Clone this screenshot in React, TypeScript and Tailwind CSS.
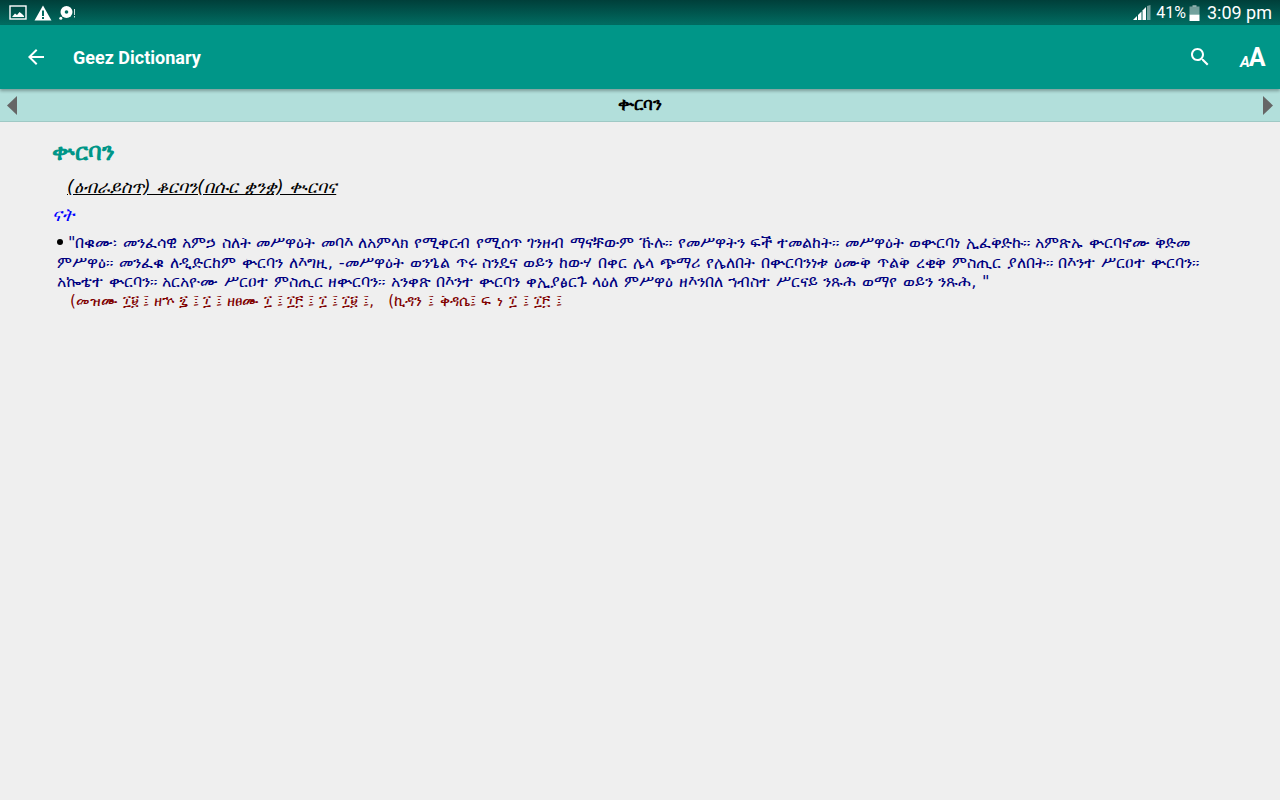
const ETHIOPIC = "font-['DejaVu_Sans','Noto_Sans',sans-serif]";

function StatusIcons() {
  return (
    <div className="flex items-center gap-[7px]">
      <svg width="18" height="15" viewBox="0 0 18 15" fill="none">
        <rect x="1" y="1" width="16" height="13" stroke="white" strokeWidth="1.4" />
        <path d="M3 12 L6 8.5 L8 10 L10.5 7 L13 9 L15 11 V12 Z" fill="white" />
      </svg>
      <svg width="18" height="16" viewBox="0 0 18 16">
        <path d="M9 0.5 L17.5 15.5 H0.5 Z" fill="white" />
        <rect x="8" y="5.5" width="2" height="5.5" fill="#01695f" />
        <rect x="8" y="12" width="2" height="2" fill="#01695f" />
      </svg>
      <svg width="17" height="16" viewBox="0 0 17 16">
        <circle cx="7.5" cy="7" r="6" fill="white" />
        <circle cx="7.5" cy="7" r="1.8" fill="#01695f" />
        <circle cx="1.8" cy="13.2" r="1.5" fill="white" />
        <rect x="15" y="4" width="1" height="6" fill="white" opacity="0.8" />
        <rect x="15" y="11" width="1" height="1.5" fill="white" opacity="0.8" />
      </svg>
    </div>
  );
}

function SignalAndBattery() {
  return (
    <div className="flex items-center text-white">
      <svg width="18" height="16" viewBox="0 0 18 16" className="mr-[5px]">
        <path d="M0 15 L4 11 V15 Z" fill="white" />
        <path d="M5 10 L8.5 6.5 V15 H5 Z" fill="white" />
        <path d="M9.5 5.5 L13 2 V15 H9.5 Z" fill="white" />
        <path d="M14 1 L17.5 0 V15 H14 Z" fill="white" opacity="0.45" />
      </svg>
      <span className="font-['Roboto',sans-serif] text-[16px] leading-none mr-[3px]">41%</span>
      <svg width="11" height="16" viewBox="0 0 11 16" className="mr-[7px]">
        <rect x="3.5" y="0" width="4" height="2" fill="white" opacity="0.45" />
        <rect x="0.5" y="1.5" width="10" height="8" fill="white" opacity="0.45" />
        <rect x="0.5" y="9.5" width="10" height="6.5" fill="white" />
      </svg>
      <span className="font-['Roboto',sans-serif] text-[18px] leading-none mr-[8px]">3:09 pm</span>
    </div>
  );
}

function Triangle({ dir }: { dir: "left" | "right" }) {
  return (
    <svg width="10" height="19" viewBox="0 0 10 19">
      <path d={dir === "left" ? "M10 0 V19 L0 9.5 Z" : "M0 0 V19 L10 9.5 Z"} fill="#666666" />
    </svg>
  );
}

export default function App() {
  return (
    <div className="w-[1280px] h-[800px] overflow-hidden bg-[#efefef] flex flex-col">
      <div className="h-[25px] shrink-0 bg-gradient-to-b from-[#003f3a] to-[#016d62] flex items-center justify-between pl-[9px]">
        <StatusIcons />
        <SignalAndBattery />
      </div>

      <div className="h-[64px] shrink-0 bg-[#009688] flex items-center text-white shadow-[0_2px_3px_rgba(0,0,0,0.3)] z-10">
        <svg width="24" height="24" viewBox="0 0 24 24" fill="white" className="ml-[24px]">
          <path d="M20 11H7.83l5.59-5.59L12 4l-8 8 8 8 1.41-1.41L7.83 13H20v-2z" />
        </svg>
        <span className="ml-[25px] font-['Roboto',sans-serif] font-bold text-[18px] mt-[1px]">Geez Dictionary</span>
        <svg width="24" height="24" viewBox="0 0 24 24" fill="white" className="ml-auto">
          <path d="M15.5 14h-.79l-.28-.27C15.41 12.59 16 11.11 16 9.5 16 5.91 13.09 3 9.5 3S3 5.91 3 9.5 5.91 16 9.5 16c1.61 0 3.09-.59 4.23-1.57l.27.28v.79l5 4.99L20.49 19l-4.99-5zm-6 0C7.01 14 5 11.99 5 9.5S7.01 5 9.5 5 14 7.01 14 9.5 11.99 14 9.5 14z" />
        </svg>
        <div className="ml-[28px] mr-[16px] flex items-end w-[24px] font-['Roboto',sans-serif] font-bold leading-none">
          <span className="text-[15px] italic">A</span>
          <span className="text-[25px] -ml-[1px]">A</span>
        </div>
      </div>

      <div className="h-[33px] shrink-0 bg-[#b2dfdb] border-b border-[#9fc9c5] flex items-center justify-between px-[7px]">
        <Triangle dir="left" />
        <span className={`${ETHIOPIC} font-bold text-[16.5px] text-black pt-[1px]`}>ቍርባን</span>
        <Triangle dir="right" />
      </div>

      <div className={`${ETHIOPIC} pl-[52px] pr-[60px]`}>
        <h1 className="mt-[17px] text-[24px] leading-[26px] font-bold text-[#009688]">ቍርባን</h1>
        <p className="mt-[11px] ml-[15px] text-[17.6px] leading-[22px] italic text-black underline">
          (ዕብራይስጥ) ቆርባን(በሱር ቋንቋ) ቊርባና
        </p>
        <p className="mt-[6px] text-[18px] leading-[22px] italic text-[#0000ff]">ናት</p>
        <div className="mt-[7px] ml-[5px] text-[16.3px] leading-[19.5px] whitespace-nowrap text-[#000080]">
          <span className="inline-block w-[6px] h-[6px] rounded-full bg-black mr-[5px] align-[3px]" />
          <span className="[word-spacing:0.25px]">
            "በቁሙ፡ መንፈሳዊ አምኃ ስለት መሥዋዕት መባእ ለአምላክ የሚቀርብ የሚሰጥ ገንዘብ ማናቸውም ኹሉ። የመሥዋትን ፍች ተመልከት። መሥዋዕት ወቍርባነ ኢፈቅድኩ። አምጽኡ ቍርባኖሙ ቅድመ
          </span>
          <br />
          <span className="[word-spacing:0.75px]">
            ምሥዋዕ። መንፈቁ ለዲድርከም ቍርባን ለእግዚ, -መሥዋዕት ወንጌል ጥሩ ስንዴና ወይን ከውሃ በቀር ሌላ ጭማሪ የሌለበት በቍርባንነቱ ዕሙቅ ጥልቅ ረቂቅ ምስጢር ያለበት። በእንተ ሥርዐተ ቍርባን።
          </span>
          <br />
          <span className="[word-spacing:0.45px]">
            አኰቴተ ቍርባን። አርአዮሙ ሥርዐተ ምስጢር ዘቍርባን። አንቀጽ በእንተ ቍርባን ቀኢያፅርጉ ላዕለ ምሥዋዕ ዘእንበለ ኀብስተ ሥርናይ ንጹሕ ወማየ ወይን ንጹሕ, "
          </span>
        </div>
        <p className="ml-[18px] text-[15px] leading-[19px] whitespace-nowrap text-[#800000]">
          (መዝሙ ፲፱ ፤ ዘኍ ፯ ፤ ፲ ፤ ዘፀሙ ፲ ፤ ፲፫ ፤ ፲ ፤ ፲፱ ፤,&nbsp;&nbsp;&nbsp;
          <span className="[word-spacing:1px]">(ኪዳን ፤ ቅዳሴ፤ ፍ ነ ፲ ፤ ፲፫ ፤</span>
        </p>
      </div>
    </div>
  );
}
